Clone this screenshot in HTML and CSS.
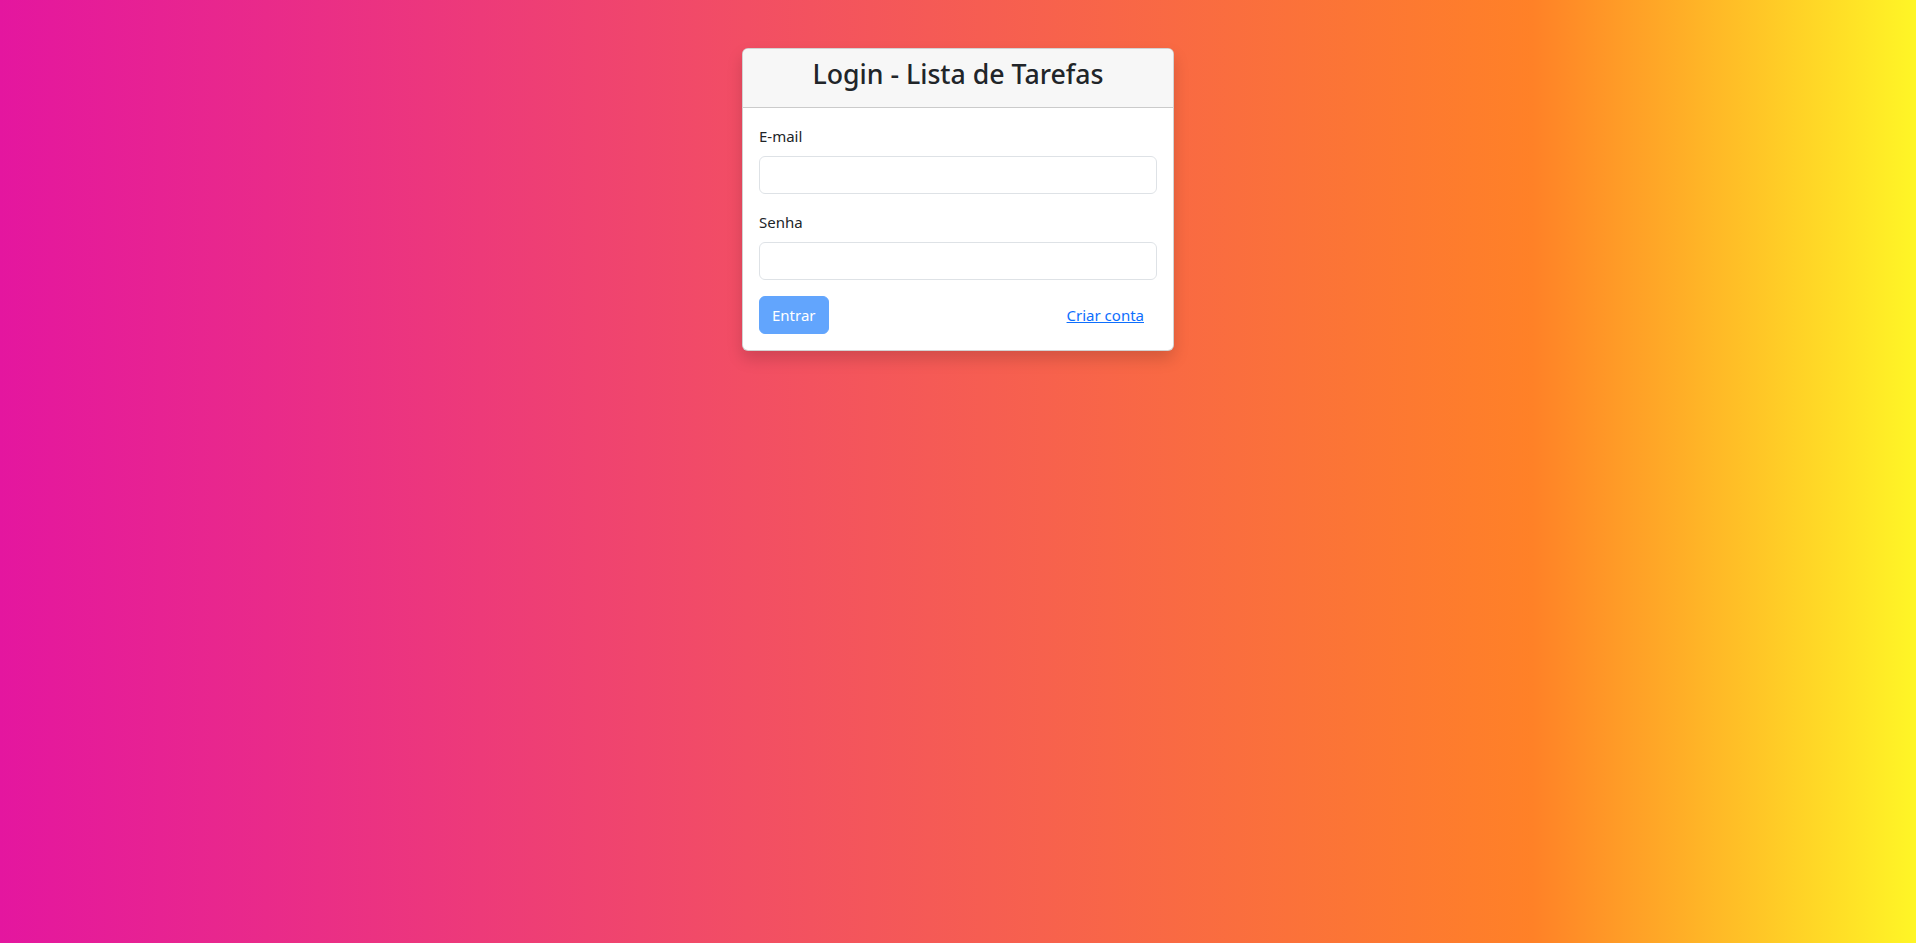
FILE: index.html
```html
<!DOCTYPE html>
<html lang="pt-BR">
<head>
<meta charset="utf-8">
<title>Login - Lista de Tarefas</title>
<link rel="stylesheet" href="styles.css">
</head>
<body>
<main class="page">
  <div class="card">
    <div class="card-header">
      <h3 class="card-title">Login - Lista de Tarefas</h3>
    </div>
    <div class="card-body">
      <form class="form">
        <div class="field">
          <label class="form-label" for="email">E-mail</label>
          <input class="form-control" id="email" type="email">
        </div>
        <div class="field">
          <label class="form-label" for="senha">Senha</label>
          <input class="form-control" id="senha" type="password">
        </div>
        <div class="actions">
          <button class="btn btn-primary" type="button" disabled>Entrar</button>
          <a class="btn btn-link" href="#">Criar conta</a>
        </div>
      </form>
    </div>
  </div>
</main>
</body>
</html>
```
FILE: styles.css
```css
* { box-sizing: border-box; }
html, body { margin: 0; height: 100%; }
body {
  font-family: "Noto Sans", "Open Sans", sans-serif;
  font-size: 15px;
  line-height: 24px;
  color: #212529;
  background: linear-gradient(to right, #e4169f 0%, #f24e64 39%, #ff8127 80%, #fff626 100%);
  min-height: 943px;
}
.page {
  display: flex;
  justify-content: center;
  padding-top: 48px;
}
.card {
  width: 432px;
  background: #fff;
  border: 1px solid rgba(0,0,0,.175);
  border-radius: 6px;
  box-shadow: 0 8px 16px rgba(0,0,0,.15);
  overflow: hidden;
}
.card-header {
  background: #f7f7f7;
  border-bottom: 1px solid rgba(0,0,0,.175);
  padding: 8px 16px;
}
.card-title {
  margin: 0 0 8px;
  font-size: 26.7px;
  font-weight: 500;
  line-height: 33.6px;
  text-align: center;
  color: #212529;
}
.card-body { padding: 16px; }
.field { margin-bottom: 16px; }
.form-label {
  display: block;
  margin-bottom: 8px;
}
.form-control {
  display: block;
  width: 100%;
  height: 38px;
  padding: 6px 12px;
  font: inherit;
  border: 1px solid #dee2e6;
  border-radius: 6px;
  background: #fff;
}
.actions {
  display: flex;
  justify-content: space-between;
  align-items: center;
}
.btn {
  display: inline-block;
  height: 38px;
  padding: 6px 12px;
  font: inherit;
  line-height: 24px;
  border: 1px solid transparent;
  border-radius: 6px;
}
.btn-primary {
  color: #fff;
  background: #62a5fd;
  border-color: #62a5fd;
}
.btn-link {
  color: #0d6efd;
  text-decoration: underline;
}
```
